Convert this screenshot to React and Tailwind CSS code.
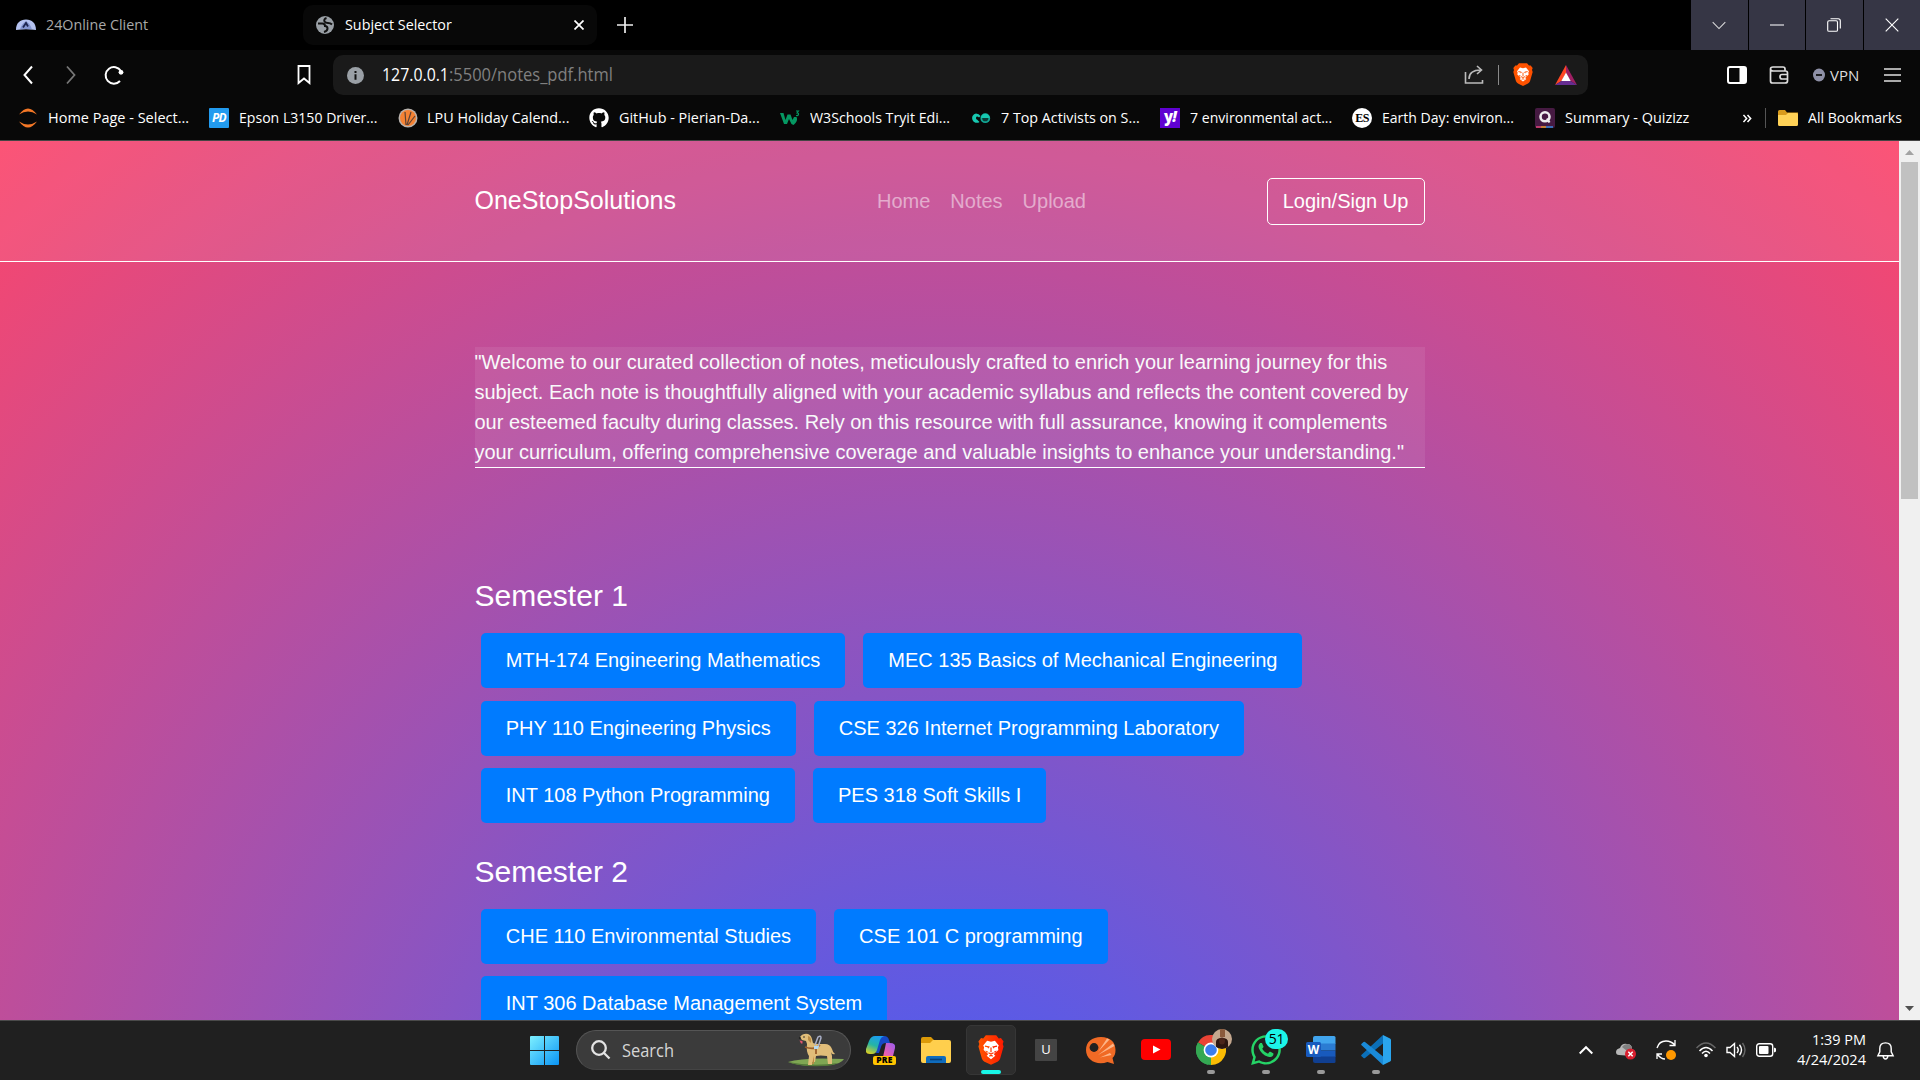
import React, { useLayoutEffect, useRef, useState } from "react";
import { FaGithub, FaWhatsapp } from "react-icons/fa";

/* A single line of text scaled horizontally to a given width. */
function Fit({ w, className = "", children }) {
  const ref = useRef(null);
  const [scale, setScale] = useState(1);
  useLayoutEffect(() => {
    const measure = () => {
      if (ref.current && ref.current.offsetWidth) setScale(w / ref.current.offsetWidth);
    };
    measure();
    document.fonts?.ready.then(measure);
  }, [w]);
  return (
    <span className={"block shrink-0 whitespace-nowrap " + className} style={{ width: w }}>
      <span ref={ref} className="inline-block origin-left" style={{ transform: `scaleX(${scale})` }}>
        {children}
      </span>
    </span>
  );
}

const Line = ({ size = 20, children, sw = 1.5, color = "#fff", className = "" }) => (
  <svg width={size} height={size} viewBox="0 0 20 20" fill="none" stroke={color} strokeWidth={sw} className={"shrink-0 " + className}>
    {children}
  </svg>
);

function BraveIcon({ size, id }) {
  return (
    <svg width={size} height={size * 1.16} viewBox="0 0 30 34" className="shrink-0">
      <defs>
        <linearGradient id={id}>
          <stop stopColor="#ff5500" />
          <stop offset="1" stopColor={id === "braveTask" ? "#ff1a00" : "#ff5000"} />
        </linearGradient>
      </defs>
      <path d="M9 0h12l3 3.500 2.500-.3L29.500 7l-1 3 1 3-4 14q-1 2-3 3.500L15 34l-7.500-3.500q-2-1.500-3-3.500L.5 13l1-3-1-3 3-3.800 2.500.3z" fill={`url(#${id})`} />
      <path d="M15 7.500l4.500-1.200 4.500 5.500-1 2 .5 3-4.500 4-.5 1.500 1.500 1.200-5 4-5-4 1.500-1.200-.5-1.500-4.500-4 .5-3-1-2 4.500-5.500z" fill="#fff" />
      <path d="M8 12.500l4.500.8-1 1.500M22 12.500l-4.500.8 1 1.500M15 14v5.500M12 20l3 1.500 3-1.500M13 24l2-.8 2 .8" fill="none" stroke={`url(#${id})`} strokeWidth="1.400" />
      <path d="M8.500 17.500l3 1-1 2zM21.500 17.500l-3 1 1 2z" fill={`url(#${id})`} />
    </svg>
  );
}

function TabStrip() {
  return (
    <div className="flex h-[50px] bg-black text-[15px]">
      <div className="flex w-[303px] items-center pb-px pl-4">
        <svg width="20" height="20" viewBox="0 0 20 20">
          <path d="M0 15C0 8 4 4.500 10 4.500S20 8 20 15q-10-1.500-20 0z" fill="#b4c2f0" />
          <path d="M4 14.200Q6 8 10 6.500q4 1.500 6 7.700-6-.6-12 0z" fill="#8496d2" />
          <path d="M7 12.500L10 8l2 3.500" stroke="#1c2550" strokeWidth="1.800" fill="none" />
        </svg>
        <Fit w={102} className="ml-[10px] text-[#a9a9a9]">24Online Client</Fit>
      </div>
      <div className="mt-[5px] flex h-10 w-[294px] items-center rounded-[10px] bg-[#080808] pb-px pl-[13px]">
        <svg width="18" height="18" viewBox="0 0 18 18">
          <circle cx="9" cy="9" r="9" fill="#9aa0a6" />
          <path d="M2 7.500h4.500q2.500 0 2.500 2.500 2.500 0 2.500 2.500T8 16M10.500 2Q7.500 3 8.500 5.500q1 1.500 3.500 1.500t4 1.500" stroke="#111" strokeWidth="2" fill="none" />
        </svg>
        <Fit w={107} className="ml-[11px] text-white">Subject Selector</Fit>
        <Line size={10} sw={3.400} className="ml-auto mr-[13px]"><path d="M1 1l18 18M19 1L1 19" /></Line>
      </div>
      <div className="flex w-14 items-center justify-center">
        <Line size={16} sw={2.100} color="#eee"><path d="M10 0v20M0 10h20" /></Line>
      </div>
      <div className="ml-auto flex w-[229px] gap-px *:flex *:flex-1 *:items-center *:justify-center *:bg-[#363645] *:pb-px">
        <div><Line size={14} sw={1.500} color="#ddd"><path d="M1 6l9 9 9-9" /></Line></div>
        <div><Line size={14} sw={1.500}><path d="M0 10h20" /></Line></div>
        <div><Line size={14} sw={1.600}><rect x="1" y="4" width="14" height="15" rx="2" /><path d="M5 1h11q3 0 3 3v11" /></Line></div>
        <div><Line size={14} sw={1.600}><path d="M1 1l18 18M19 1L1 19" /></Line></div>
      </div>
    </div>
  );
}

function Toolbar() {
  return (
    <div className="flex h-[50px] items-center bg-[#080808]">
      <div className="flex w-[333px] items-center pl-[18px]">
        <Line sw={2}><path d="M14 1.500L6.500 10l7.500 8.500" /></Line>
        <Line sw={1.800} color="#777" className="ml-[23px]"><path d="M6 1.500l7.500 8.500L6 18.500" /></Line>
        <Line sw={2} className="ml-[23px]"><path d="M16 16A8.300 8.300 0 1 1 17 6" /><circle cx="17" cy="7.300" r="2.400" fill="#fff" stroke="none" /></Line>
        <Line sw={1.800} className="ml-auto mr-[19px]"><path d="M4.500 1h11v17l-5.500-4.500L4.500 18z" /></Line>
      </div>
      <div className="flex h-10 w-[1255px] items-center rounded-[10px] bg-[#1a1a1a] pl-[14px] text-[18px]">
        <svg width="17" height="17" viewBox="0 0 17 17" className="mr-[18px]">
          <circle cx="8.500" cy="8.500" r="8.500" fill="#9aa0a6" />
          <path d="M8.500 4v2M8.500 7.300v5.400" stroke="#111" strokeWidth="2" />
        </svg>
        <Fit w={67} className="-mt-px text-white">127.0.0.1</Fit>
        <Fit w={164} className="-mt-px text-[#808080]">:5500/notes_pdf.html</Fit>
        <div className="ml-auto flex items-center pr-[11px]">
          <Line sw={1.600} color="#bbb" className="mr-px"><path d="M1.500 7v11h17v-3M5 14c0-6 4-9 12-9M13 1l4.500 4-4.500 4" /></Line>
          <div className="ml-[13px] h-5 w-px bg-[#8a8a8a]" />
          <div className="ml-[14px]"><BraveIcon size={20} id="braveBar" /></div>
          <svg width="22" height="20" viewBox="0 0 22 20" className="ml-[22px]">
            <path d="M11 0L0 20l6.500-4L11 8z" fill="#ff4724" />
            <path d="M11 0l11 20-6.500-4L11 8z" fill="#9e1f63" />
            <path d="M0 20h22l-6.500-4h-9z" fill="#662d91" />
            <path d="M11 7.500L6.300 16h9.400z" fill="#fff" />
          </svg>
        </div>
      </div>
      <div className="ml-auto flex items-center pr-[19px]">
        <svg width="20" height="18" viewBox="0 0 20 18"><rect x="1" y="1" width="18" height="16" rx="2" fill="none" stroke="#fff" strokeWidth="2" /><path d="M12.500 1H19v16h-6.500z" fill="#fff" /></svg>
        <Line size={20} sw={1.700} color="#ddd" className="ml-[22px]"><path d="M1.500 4V16q0 2 2 2H16q2.500 0 2.500-2V8q0-2-2-2H4q-2.500 0-2.500-2T4 2h10q2 0 2 2v2M18.500 9.500H13q-2 0-2 2.200t2 2.300h5.500" /></Line>
        <svg width="12" height="14" viewBox="0 0 12 14" className="ml-6"><ellipse cx="6" cy="7" rx="6" ry="6.500" fill="#8e90a6" /><path d="M3 7h6" stroke="#111" strokeWidth="1.800" /></svg>
        <Fit w={29} className="ml-[5px] text-[15px] text-[#ddd]">VPN</Fit>
        <svg width="17" height="14" viewBox="0 0 17 14" className="ml-[25px]"><path d="M0 1h17M0 7h17M0 13h17" stroke="#e0e0e0" strokeWidth="1.600" /></svg>
      </div>
    </div>
  );
}

const Jupyter = () => (
  <svg width="20" height="20" viewBox="0 0 20 20"><path d="M1 6.500Q10-5.500 19 6.500q-9-6-18 0zM1 13.500q9 12 18 0-9 6-18 0z" fill="#f37726" /></svg>
);
const PaperDriver = () => (
  <div className="flex h-5 w-5 items-center justify-center rounded-[1px] bg-[#229bef] text-[12px] font-bold italic leading-none tracking-tighter text-white">PD</div>
);
const Lpu = () => (
  <svg width="20" height="20" viewBox="0 0 20 20"><circle cx="10" cy="10" r="9.500" fill="#b9b3ae" /><circle cx="10" cy="10" r="8" fill="#f58233" /><path d="M8 17L7 4M9 17l4-13M10 17l7-9" stroke="#5d4234" strokeWidth="1.200" /></svg>
);
const W3 = () => (
  <svg width="20" height="20" viewBox="0 0 20 20"><path d="M0 5h3.500l2 7 2-5.500h3l2 5.500 1.500-3h2.500q1.500 3-1 6l-2 2-2-1-2.500-5-2 5H4z" fill="#059862" /><path d="M16 3h2.500l-1.500 2q2 0 1.500 1.500T16 7.500" stroke="#059862" strokeWidth="1.100" fill="none" /></svg>
);
const Teal = () => (
  <svg width="20" height="20" viewBox="0 0 20 20"><path d="M9.500 8Q8 5.500 5 5.500A4.700 4.700 0 1 0 8.500 14L6 11.500q-1 0-1-1.500t1-1.500 2 1z" fill="#17c8b0" /><circle cx="14.300" cy="10.200" r="4" stroke="#12a896" strokeWidth="1.800" fill="#0b3b36" /><path d="M10 10a4 4 0 0 1 8.500 0z" fill="#17c8b0" /></svg>
);
const Yahoo = () => (
  <div className="flex h-5 w-5 items-center justify-center bg-[#5f01d1] pb-1 text-[15px] font-extrabold leading-none tracking-tighter text-white">y<i>!</i></div>
);
const EarthDay = () => (
  <div className="flex h-5 w-5 items-center justify-center rounded-full bg-white font-['Liberation_Serif',serif] text-[12px] font-bold leading-none tracking-tighter text-black">ES</div>
);
const Quizizz = () => (
  <svg width="20" height="20" viewBox="0 0 20 20"><rect width="20" height="20" rx="2" fill="#461a42" /><path d="M1 19h5" stroke="#e2457a" strokeWidth="1.500" /><path d="M6 19h5" stroke="#f0a030" strokeWidth="1.500" /><path d="M11 19h7" stroke="#3a8de0" strokeWidth="1.500" /><circle cx="10" cy="8.800" r="4.500" stroke="#eee" strokeWidth="2.600" fill="none" /><path d="M12 10.500l2.500 4" stroke="#eee" strokeWidth="2.200" /></svg>
);

const bookmarks = [
  [Jupyter, "Home Page - Select...", 141, 18, 10],
  [PaperDriver, "Epson L3150 Driver...", 138, 20, 10],
  [Lpu, "LPU Holiday Calend...", 142, 21, 9],
  [() => <FaGithub size={20} color="#fff" />, "GitHub - Pierian-Da...", 141, 20, 10],
  [W3, "W3Schools Tryit Edi...", 140, 20, 10],
  [Teal, "7 Top Activists on S...", 139, 21, 10],
  [Yahoo, "7 environmental act...", 142, 20, 10],
  [EarthDay, "Earth Day: environ...", 132, 20, 10],
  [Quizizz, "Summary - Quizizz", 124, 21, 10],
];

function BookmarkBar() {
  return (
    <div className="flex h-[41px] items-center border-b border-[#444] bg-[#080808] pb-1 text-[15px] text-white">
      {bookmarks.map(([Icon, label, w, gap, inner]) => (
        <div key={label} className="flex items-center" style={{ marginLeft: gap }}>
          <Icon />
          <span className="-mt-px" style={{ marginLeft: inner }}><Fit w={w}>{label}</Fit></span>
        </div>
      ))}
      <div className="ml-auto flex items-center pr-[18px]">
        <Line size={9} sw={3.500} className="mr-[13px]"><path d="M1 2l7 8-7 8M10 2l7 8-7 8" /></Line>
        <div className="mr-3 h-5 w-px bg-[#555]" />
        <svg width="20" height="16" viewBox="0 0 20 16"><path d="M0 1.500Q0 0 1.500 0H7l2 2.500h11V14H0z" fill="#d99b1c" /><path d="M0 5h8l2-2h8.500Q20 3 20 4.500v10q0 1.500-1.500 1.500h-17Q0 16 0 14.500z" fill="#ffd257" /></svg>
        <Fit w={94} className="-mt-px ml-[10px]">All Bookmarks</Fit>
      </div>
    </div>
  );
}

const Subject = ({ children }) => (
  <a className="flex h-[55px] items-center whitespace-nowrap rounded-[5px] bg-[#007bff] px-[25px] pb-px">{children}</a>
);

function Semester({ title, subjects, className = "" }) {
  return (
    <section className={className}>
      <h3 className="text-[30px] leading-9">{title}</h3>
      <div className="mt-[19px] flex flex-wrap gap-x-[18px] gap-y-[12.5px] pl-[6.25px]">
        {subjects.map((s) => <Subject key={s}>{s}</Subject>)}
      </div>
    </section>
  );
}

function Page() {
  return (
    <main className="flex h-[879px] overflow-hidden font-['Liberation_Sans',Arial,sans-serif] text-[20px] leading-[30px] text-white">
      <div className="h-[2186px] w-[1899px] bg-[radial-gradient(circle,rgb(63,94,251)_0%,rgb(252,70,107)_100%)]">
        <nav className="h-[121px] border-b border-white bg-white/[0.08]">
          <div className="mx-auto flex h-[121px] w-[950px] items-center">
            <span className="w-[402.5px] pb-[3px] text-[25px]">OneStopSolutions</span>
            <span className="flex gap-5 pb-[2px] text-white/50"><a>Home</a><a>Notes</a><a>Upload</a></span>
            <a className="ml-auto flex h-[47px] w-[158px] items-center justify-center rounded-[5px] border border-white pb-[2px]">Login/Sign Up</a>
          </div>
        </nav>
        <div className="mx-auto w-[950px] pt-[85px]">
          <p className="h-[121px] whitespace-nowrap border-b border-white bg-white/[0.08] text-[#f8f9fa]">
            "Welcome to our curated collection of notes, meticulously crafted to enrich your learning journey for this<br />
            subject. Each note is thoughtfully aligned with your academic syllabus and reflects the content covered by<br />
            our esteemed faculty during classes. Rely on this resource with full assurance, knowing it complements<br />
            your curriculum, offering comprehensive coverage and valuable insights to enhance your understanding."
          </p>
          <Semester className="mt-[110px]" title="Semester 1" subjects={["MTH-174 Engineering Mathematics", "MEC 135 Basics of Mechanical Engineering", "PHY 110 Engineering Physics", "CSE 326 Internet Programming Laboratory", "INT 108 Python Programming", "PES 318 Soft Skills I"]} />
          <Semester className="mt-[30.5px]" title="Semester 2" subjects={["CHE 110 Environmental Studies", "CSE 101 C programming", "INT 306 Database Management System"]} />
        </div>
      </div>
      <div className="flex w-[21px] flex-col items-center bg-[#f0f0f0]">
        <svg width="9" height="5" viewBox="0 0 9 5" className="mt-[9px]"><path d="M0 5l4.500-5L9 5z" fill="#a3a3a3" /></svg>
        <div className="mt-[7px] h-[337px] w-[17px] bg-[#c1c1c1]" />
        <svg width="9" height="5" viewBox="0 0 9 5" className="mb-[9px] mt-auto"><path d="M0 0l4.500 5L9 0z" fill="#505050" /></svg>
      </div>
    </main>
  );
}

const Windows = () => (
  <svg width="29" height="29" viewBox="0 0 29 29">
    <defs><linearGradient id="win" x1="0" y1="0" x2="1" y2="1"><stop stopColor="#7df0ff" /><stop offset="1" stopColor="#0a94f5" /></linearGradient></defs>
    <path d="M1 0h13v14H0V1q0-1 1-1zM15 0h13q1 0 1 1v13H15zM0 15h14v14H1q-1 0-1-1zM15 15h14v13q0 1-1 1H15z" fill="url(#win)" />
  </svg>
);

const Dog = () => (
  <svg width="58" height="34" viewBox="0 0 58 34">
    <path d="M1 29Q16 24 57 26q-3 5-14 6-25 3-42-3z" fill="#7fa653" />
    <path d="M1 29q25 5 50 1-6 3-14 3-26 1-36-4z" fill="#55793a" />
    <path d="M13 4q3-4 8-3 3 1 4 5l1 4q2 1 5 1h7q5 0 7 5 1 4 3 5-3 1-4-2l1 4v8h-4l-1-8q-7-1-11 0l-1 6h-3v3h-4l1-9q-3-4-2-12l-1-3-4-1z" fill="#e0bd79" />
    <path d="M21 3q4 1 3 7l-3-3zM27 23v8h-2M41 20l2 9" fill="#b98b45" />
    <path d="M12.500 7.500l1.500 3h1.500V8z" fill="#e2556c" />
    <circle cx="17" cy="4" r=".8" fill="#222" /><circle cx="12.800" cy="5" r="1" fill="#222" />
    <path d="M18 14q5 2 11 1l4-3M29 15v6" stroke="#9b5f2c" strokeWidth="1.800" fill="none" />
    <path d="M28 12l3-8q3-2 3 1l-3 9" stroke="#aab0c8" strokeWidth="1.500" fill="none" />
    <path d="M27 13h5l-1 3h-4z" fill="#b5d9f3" />
  </svg>
);

const Copilot = () => (
  <div className="relative h-[30px] w-[30px]">
    <svg width="30" height="30" viewBox="0 0 30 30">
      <defs>
        <linearGradient id="cpA" x1="0.600" y1="0" x2="0.200" y2="1"><stop stopColor="#1b9df0" /><stop offset=".5" stopColor="#25b5a5" /><stop offset="1" stopColor="#e0d020" /></linearGradient>
        <linearGradient id="cpB" x1="1" y1="0" x2="0" y2="1"><stop stopColor="#9a5cf0" /><stop offset=".6" stopColor="#e85fae" /><stop offset="1" stopColor="#ff8060" /></linearGradient>
      </defs>
      <path d="M12 1h6q4 0 5 4l1 3h-4q-4 0-5 4l-2 6H10z" fill="#1549c5" />
      <path d="M9 1h9q-3 1-4 4l-3 10q-1 4-5 4H4q-5 0-4-5l3-8q2-5 6-5z" fill="url(#cpA)" />
      <path d="M20 8h4q6 0 5 5l-2 8q-2 5-6 5h-8q3-1 4-4l2-9q1-5 1-5z" fill="url(#cpB)" />
    </svg>
    <span className="absolute bottom-0 left-[7px] flex h-[9px] w-[23px] items-center justify-center rounded-[2px] bg-[#ffc400] text-[8.5px] font-extrabold leading-none tracking-wide text-black">PRE</span>
  </div>
);

const Folder = () => (
  <svg width="30" height="27" viewBox="0 0 30 27">
    <path d="M0 2q0-2 2-2h8l3 3h15v8H0z" fill="#dc9a08" />
    <path d="M0 6h9l3-3h16q2 0 2 2v19q0 2-2 2H2q-2 0-2-2z" fill="#ffcf4d" />
    <path d="M5 26v-5q0-2 2-2h16q2 0 2 2v5z" fill="#0f6cbd" /><path d="M9 22.500h12" stroke="#063f78" strokeWidth="1.600" />
  </svg>
);

const Cricket = () => (
  <svg width="30" height="30" viewBox="0 0 30 30">
    <path d="M15 2c9 0 14.500 5 14.500 13 0 4-1 6-3 8l1.500 6-6.500-2C11 31 0 25 0 15 0 7 6 2 15 2z" fill="#f06a25" />
    <path d="M12 17L21 3.500l2.500 1zM12 20L27 8.500l1.500 2.500zM14 22.500l10-4.500 1.500 2z" fill="#fdb588" />
    <circle cx="8" cy="12.500" r="4.400" fill="#202020" />
  </svg>
);

const YouTube = () => (
  <svg width="30" height="22" viewBox="0 0 30 22"><rect width="30" height="21" rx="4" fill="#f00" /><path d="M12 6.500v8l7.500-4z" fill="#fff" /></svg>
);

const Chrome = () => (
  <div className="relative h-[30px] w-[30px]">
    <svg width="30" height="30" viewBox="0 0 30 30">
      <path d="M15 15L2 7.500A15 15 0 0 1 28 7.500z" fill="#ea4335" />
      <path d="M15 15L2 7.500A15 15 0 0 0 15 30z" fill="#34a853" />
      <path d="M15 15l13-7.500A15 15 0 0 1 15 30z" fill="#fbbc04" />
      <path d="M2 7.500L8.500 19A7.500 7.500 0 0 0 15 22.500L12 29.700A15 15 0 0 1 2 7.500z" fill="#34a853" />
      <path d="M15 7.500h13L15 15z" fill="#ea4335" />
      <circle cx="15" cy="15" r="7.400" fill="#fff" /><circle cx="15" cy="15" r="5.800" fill="#3b7ded" />
    </svg>
    <svg width="20" height="20" viewBox="0 0 20 20" className="absolute -top-[6px] left-4">
      <defs><clipPath id="av"><circle cx="10" cy="10" r="10" /></clipPath></defs>
      <g clipPath="url(#av)"><path d="M0 0h20v20H0z" fill="#c4a78e" /><path d="M8 0h5v8H8z" fill="#8b5a3c" /><path d="M4 20V13q0-4 6-4t6 4v7z" fill="#2b1510" /><ellipse cx="10" cy="12" rx="3" ry="3.500" fill="#4a241a" /></g>
    </svg>
  </div>
);

const WhatsApp = () => (
  <div className="relative h-[30px] w-[30px]">
    <FaWhatsapp size={34} color="#25d366" className="-ml-[2px] -mt-[2px]" />
    <span className="absolute -top-[6px] left-[14px] flex h-5 w-[23px] items-center justify-center rounded-full bg-[#1cf5e8] text-[14px] leading-none tracking-tight text-black">51</span>
  </div>
);

const Word = () => (
  <div className="relative h-[30px] w-[30px]">
    <svg width="30" height="30" viewBox="0 0 30 30">
      <path d="M7 9V3q0-2 2-2h19q1.500 0 1.500 1.500V9z" fill="#41a5ee" /><path d="M7 8.500h22.500v7H7z" fill="#2b7cd3" /><path d="M7 15.500h22.500V22H7z" fill="#185abd" /><path d="M7 21.500h22.500V27q0 1-1.500 1H9q-2 0-2-2z" fill="#103f91" />
      <rect y="7" width="15" height="15" rx="1.500" fill="#185abd" />
    </svg>
    <span className="absolute left-0 top-[7px] flex h-[15px] w-[15px] items-center justify-center text-[12px] font-bold leading-none text-white">W</span>
  </div>
);

const VsCode = () => (
  <svg width="30" height="30" viewBox="0 0 30 30">
    <path d="M22 0l7 3.500q1 .5 1 1.500v20q0 1-1 1.500L22 30z" fill="#2aa5ee" />
    <path d="M22 0v8.500L4 23q-.8.600-1.500 0L.6 21.300q-.9-.8 0-1.600z" fill="#0b6fb8" />
    <path d="M22 30v-8.500L4 7q-.8-.6-1.500 0L.6 8.700q-.9.800 0 1.600z" fill="#1a8ad8" />
  </svg>
);

const LetterU = () => (
  <div className="flex h-[22px] w-[22px] items-center justify-center rounded-[1px] bg-[#444] text-[13px] text-white">U</div>
);

const apps = [
  [Copilot], [Folder], [() => <BraveIcon size={26} id="braveTask" />, "active"], [LetterU], [Cricket], [YouTube],
  [Chrome, "open"], [WhatsApp, "open"], [Word, "open"], [VsCode, "open"],
];

function Taskbar() {
  return (
    <footer className="flex h-[60px] items-center border-t border-[#4a4a4a] bg-[#202020] pb-px text-white">
      <div className="ml-[530px]"><Windows /></div>
      <div className="ml-[17px] flex h-10 w-[275px] items-center rounded-full border border-[#555] border-b-[#444] bg-[#3b3b3b] pl-[14px] pr-[5px]">
        <Line sw={2.300} color="#e4e4e4"><circle cx="8" cy="8" r="6.800" /><path d="M13 13l5.500 5.500" /></Line>
        <Fit w={52} className="ml-[11px] text-[18px] text-[#d6d6d6]">Search</Fit>
        <div className="ml-auto"><Dog /></div>
      </div>
      <div className="ml-[5px] flex gap-[5px]">
        {apps.map(([Icon, state], i) => (
          <div key={i} className={"relative flex h-[50px] w-[50px] items-center justify-center rounded-[5px] " + (state === "active" ? "border border-[#363636] bg-[#2d2d2d]" : "")}>
            <Icon />
            {state === "active" && <span className="absolute bottom-0 left-[14px] h-1 w-5 rounded-full bg-[#18f5e6]" />}
            {state === "open" && <span className="absolute bottom-[1px] left-[21px] h-1 w-2 rounded-full bg-[#999]" />}
          </div>
        ))}
      </div>
      <div className="ml-auto flex items-center">
        <Line size={14} sw={2.800}><path d="M1 15l9-9 9 9" /></Line>
        <svg width="20" height="20" viewBox="0 0 20 20" className="ml-[23px]">
          <path d="M3 15Q0 15 0 12t4-4q2-5 7-4 5 0 5 5 3 1 3 4l-3 3z" fill="#b8b8b8" /><path d="M6 7q2-3 6-3 4 1 4 5l-5 2z" fill="#808080" />
          <circle cx="14.500" cy="14" r="5.500" fill="#d81f2f" /><path d="M12.300 11.800l4.400 4.400M16.700 11.800l-4.400 4.400" stroke="#fff" strokeWidth="1.500" />
        </svg>
        <svg width="20" height="20" viewBox="0 0 20 20" className="ml-5">
          <path d="M1 8Q3 1 10 1q5 0 9 4M19 0v5.500h-5.500M1 19v-5h5M1.500 14.500Q5 19 9 19" stroke="#fff" strokeWidth="1.300" fill="none" /><circle cx="15" cy="15" r="5" fill="#ff9800" />
        </svg>
        <Line className="ml-5"><g strokeWidth="1.500"><path d="M.5 8Q10-2 19.500 8" stroke="#666" /><path d="M3.500 11q6.500-7 13 0M6 13.500q4-4.500 8 0" /></g><circle cx="10" cy="15.500" r="1.800" fill="#fff" stroke="none" /></Line>
        <Line sw={1.400} className="ml-[10px]"><path d="M1 7.500h3L8.500 3.500v13L4 12.500H1zM11 7q2.500 3 0 6M13.500 4.800q4 5.200 0 10.400" /><path d="M16.500 3q5 7 0 14" stroke="#666" /></Line>
        <svg width="20" height="14" viewBox="0 0 20 14" className="ml-[10px]"><rect x=".7" y=".7" width="16" height="12.600" rx="2.500" stroke="#fff" strokeWidth="1.400" fill="none" /><rect x="3" y="3" width="9.500" height="8" rx="1" fill="#fff" /><path d="M18 4.500l2 1v3l-2 1z" fill="#fff" /></svg>
        <div className="ml-[20px] flex w-[70px] flex-col items-end pb-[2px] text-[15px] leading-5">
          <Fit w={54}>1:39 PM</Fit>
          <Fit w={69}>4/24/2024</Fit>
        </div>
        <Line size={19} sw={1.500} className="ml-[10px] mr-[25px]"><path d="M2 15.500h16l-2-4V8q0-6-6-6T4 8v3.500zM7.500 16q.5 3 2.500 3t2.500-3" /></Line>
      </div>
    </footer>
  );
}

export default function App() {
  return (
    <div className="h-[1080px] w-[1920px] overflow-hidden bg-black font-['Open_Sans','Noto_Sans',sans-serif]">
      <TabStrip />
      <Toolbar />
      <BookmarkBar />
      <Page />
      <Taskbar />
    </div>
  );
}
